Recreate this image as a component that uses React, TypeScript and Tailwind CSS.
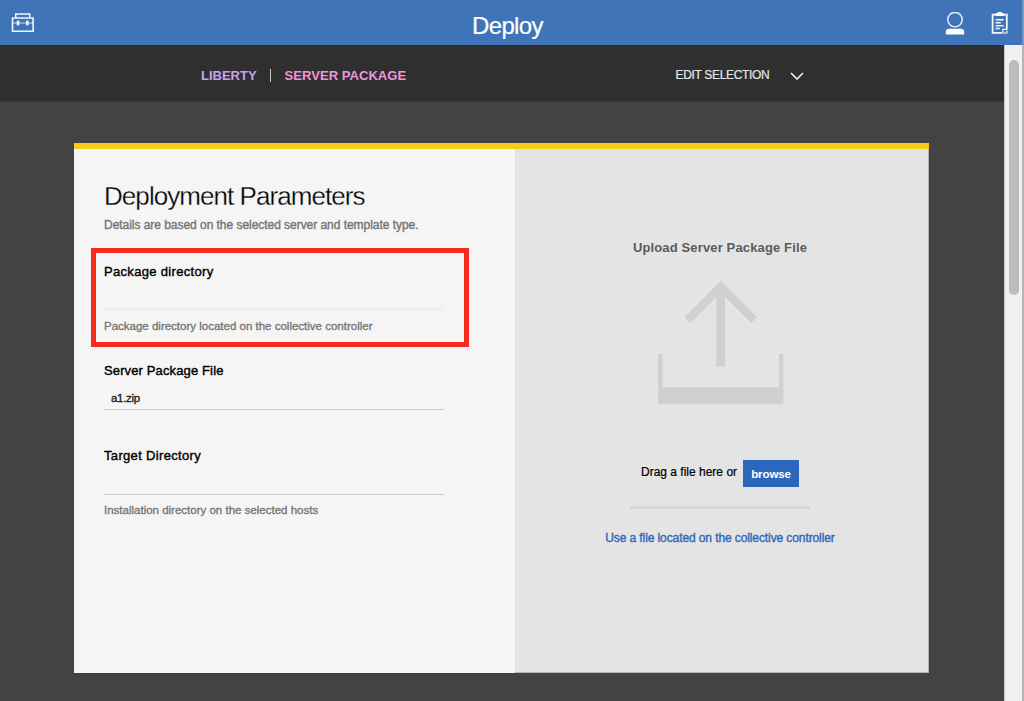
import React from "react";

function ToolboxIcon() {
  return (
    <svg width="25" height="23" viewBox="0 0 25 23" fill="none" stroke="#f0f5fc">
      <path d="M5.7 6.3V3.1H19.7V6.3" strokeWidth="1.5" />
      <path d="M2.5 7H23.1V20.3H2.5Z" strokeWidth="1.6" />
      <path d="M2.5 12H23.1" strokeWidth="1" opacity=".75" />
      <path d="M8 9.7v4.6M17.3 9.7v4.6" stroke="#fff" strokeWidth="2.5" />
    </svg>
  );
}

function UserIcon() {
  return (
    <svg width="20" height="24" viewBox="0 0 20 24">
      <circle cx="10" cy="7.6" r="7.2" fill="none" stroke="#e2ecfa" strokeWidth="1.5" />
      <path d="M.8 22.4V20Q.8 16.7 4.3 16.7H15.7Q19.2 16.7 19.2 20V22.4Z" fill="#fff" />
    </svg>
  );
}

function ClipboardIcon() {
  return (
    <svg width="17" height="23" viewBox="0 0 17 23" fill="none" stroke="#f2f6fc">
      <path d="M1.6 2.6H15.8V17M11 20.8H1.6V1.8" strokeWidth="1.8" />
      <path d="M4.4 4V1.2H6L7 0H10.4L11.4 1.2H13.1V4Z" fill="#fff" stroke="none" />
      <path d="M4.6 7.8H12.6M4.6 10.8H9.8M4.6 13.8H12.6M4.6 16.6H8.8" strokeWidth="1.5" />
      <path d="M11.8 21.4V17.4H16.4M12.5 21H15.9V18.4" strokeWidth="1.2" />
    </svg>
  );
}

function UploadIcon() {
  return (
    <svg width="126" height="124" viewBox="0 0 126 124" fill="#d0d0d0">
      <path d="M62.7 0 98.8 36.2 93.2 42 67.1 16V85.2H58.3V16L32.2 42 26.6 36.2Z" />
      <path d="M0 73H4.7V106.2H121V73H125.3V123.3H0Z" />
    </svg>
  );
}

export default function App() {
  return (
    <div className="flex h-[701px] w-[1024px] flex-col overflow-hidden bg-[#434343] font-['Liberation_Sans',Arial,sans-serif] text-black">
      <header className="flex h-[45px] shrink-0 border-r-2 border-[#7598c8] bg-[#4074b8]">
        <div className="w-[150px] pt-[11px] pl-[10px]"><ToolboxIcon /></div>
        <h1 className="flex-1 pt-[10px] pl-[322px] text-[24px] leading-8 tracking-[-0.65px] text-white [-webkit-text-stroke:0.2px_#fff]">Deploy</h1>
        <div className="flex w-[77px] gap-[26px] pt-[12px]">
          <UserIcon />
          <ClipboardIcon />
        </div>
      </header>
      <div className="flex min-h-0 flex-1">
        <main className="flex w-[1004px] flex-col">
          <nav className="flex h-[57px] shrink-0 items-center border-b border-[#3a3a3a] bg-[#2f2f2f] pt-[5px] pl-[201px]">
            <span className="w-[69px] pt-px text-[13px] font-bold text-[#c6a2ef]">LIBERTY</span>
            <span className="h-[13px] w-px bg-[#c4c4c4]" />
            <span className="w-[404.5px] pt-px pl-[13.5px] text-[13px] font-bold tracking-[0.06px] text-[#ef95da]">SERVER PACKAGE</span>
            <button className="flex items-center gap-[20.5px] text-[12px] tracking-[-0.33px] whitespace-nowrap text-[#e6e6e6] [-webkit-text-stroke:0.2px_#e6e6e6]">
              <span className="pb-[2px]">EDIT SELECTION</span>
              <svg width="14" height="8" viewBox="0 0 14 8" fill="none" stroke="#eee" strokeWidth="1.6">
                <path d="M1 1 7 7 13 1" />
              </svg>
            </button>
          </nav>
          <section className="mt-[41px] ml-[74px] flex h-[530px] w-[855px] border-t-[6px] border-[#f6ce15]">
            <div className="w-[441px] bg-[#f5f5f5] pl-[17px]">
              <div className="h-[99px] pt-[31px] pl-[13px]">
                <h2 className="text-[26px] leading-8 tracking-[-0.94px] [-webkit-text-stroke:0.3px_#f5f5f5]">Deployment Parameters</h2>
                <p className="mt-[5px] text-[12px] leading-4 tracking-[-0.04px] text-[#777] [-webkit-text-stroke:0.4px_#777]">Details are based on the selected server and template type.</p>
              </div>
              <div className="h-[99px] w-[378px] border-[5px] border-[#f42b1d] pt-[11px] pl-[8px]">
                <label className="block text-[13px] leading-4 tracking-[0.32px] [-webkit-text-stroke:0.4px_#000]">Package directory</label>
                <div className="h-[30px] w-[339px] border-b-2 border-[#ebebeb]" />
                <p className="mt-[8px] text-[11.5px] leading-4 text-[#777] [-webkit-text-stroke:0.35px_#777]">Package directory located on the collective controller</p>
              </div>
              <div className="pt-[16px] pl-[13px]">
                <label className="block text-[13px] leading-4 tracking-[0.13px] [-webkit-text-stroke:0.4px_#000]">Server Package File</label>
                <div className="h-[31px] w-[340px] border-b border-[#c9c9c9] pt-[11px] pl-[7px] text-[11.5px] leading-4 tracking-[-0.3px] text-[#222] [-webkit-text-stroke:0.35px_#222]">a1.zip</div>
                <label className="mt-[38px] block text-[13px] leading-4 tracking-[0.33px] [-webkit-text-stroke:0.4px_#000]">Target Directory</label>
                <div className="h-[31px] w-[340px] border-b border-[#c9c9c9]" />
                <p className="mt-[7px] text-[11.5px] leading-4 text-[#777] [-webkit-text-stroke:0.35px_#777]">Installation directory on the selected hosts</p>
              </div>
            </div>
            <div className="flex flex-1 flex-col items-center border-r border-b border-[#b5b5b5] bg-[#e4e4e4] pt-[91px] pr-[3px]">
              <h3 className="text-[13px] leading-4 font-bold tracking-[0.14px] text-[#5b5b5b]">Upload Server Package File</h3>
              <div className="mt-[25px] pl-px"><UploadIcon /></div>
              <div className="mt-[55px] flex h-[27px]">
                <span className="w-[102px] pt-[4px] text-[12px] leading-4 [-webkit-text-stroke:0.2px_#000]">Drag a file here or</span>
                <button className="w-[56px] bg-[#2b68bd] text-[11.5px] leading-4 font-bold tracking-[-0.1px] text-white">browse</button>
              </div>
              <div className="mt-[19px] h-[3px] w-[180px] bg-[#d6d6d6]" />
              <button className="mt-[21px] text-[12px] leading-4 tracking-[-0.1px] text-[#2f69bb] [-webkit-text-stroke:0.4px_#2f69bb]">Use a file located on the collective controller</button>
            </div>
          </section>
        </main>
        <aside className="flex w-[20px] border-r-2 border-l border-r-[#b5b5b5] border-l-[#c5c5c5] bg-[#f0f0f0] pt-[15px] pl-[4px]">
          <div className="h-[235px] w-[10px] rounded-full bg-[#bcbcbc]" />
        </aside>
      </div>
    </div>
  );
}
